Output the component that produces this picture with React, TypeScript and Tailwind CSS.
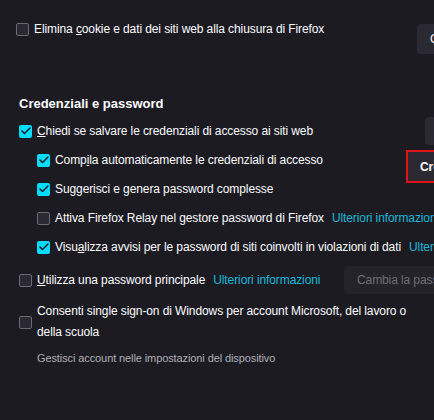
import { Check } from 'lucide-react'

function Box({ checked }: { checked?: boolean }) {
  if (checked) {
    return (
      <span className="flex h-[13px] w-[13px] shrink-0 items-center justify-center rounded-[2px] bg-[#00ddff]">
        <Check className="h-[12px] w-[12px] text-[#1c1b22]" strokeWidth={3} />
      </span>
    )
  }
  return <span className="h-[13px] w-[13px] shrink-0 rounded-[2px] border border-[#6b6a72] bg-[#2b2a33]" />
}

function Link({ children }: { children: React.ReactNode }) {
  return <span className="ml-[8px] whitespace-nowrap text-[#1ab8d8]">{children}</span>
}

function Row({ checked, children }: { checked?: boolean; children: React.ReactNode }) {
  return (
    <div className="flex h-[20px] items-center gap-[5px] whitespace-nowrap">
      <Box checked={checked} />
      <span>{children}</span>
    </div>
  )
}

export default function App() {
  return (
    <div className="h-[420px] w-[434px] overflow-hidden bg-[#1c1b22] text-[12px] tracking-[-0.1px] text-[#fbfbfe] [font-family:'Liberation_Sans',Arial,sans-serif]">
      <div className="w-[560px] pl-[19px] pt-[19px]">
        {/* cookie */}
        <div className="flex items-start justify-between">
          <div className="-ml-[3px] min-w-0">
            <Row>
              Elimina <u>c</u>ookie e dati dei siti web alla chiusura di Firefox
            </Row>
          </div>
          <button className="mt-[5px] h-[30px] w-[143px] shrink-0 rounded-[4px] bg-[#2b2a33] pl-[13px] text-left">
            Gestisci eccezioni…
          </button>
        </div>

        <h2 className="mt-[42px] text-[13px] font-bold leading-[16px] tracking-normal">Credenziali e password</h2>

        <div className="relative mt-[5px] flex items-start justify-between">
          <div className="mt-[4px] flex min-w-0 flex-col gap-[9px]">
            <Row checked>
              <u>C</u>hiedi se salvare le credenziali di accesso ai siti web
            </Row>
            <div className="flex flex-col gap-[9px] pl-[18px]">
              <Row checked>
                Comp<u>i</u>la automaticamente le credenziali di accesso
              </Row>
              <Row checked>
                Su<u>g</u>gerisci e genera password complesse
              </Row>
              <Row>
                Attiva Firefox Relay nel gestore password di Firefox
                <Link>Ulteriori informazioni</Link>
              </Row>
              <Row checked>
                Visu<u>a</u>lizza avvisi per le password di siti coinvolti in violazioni di dati
                <Link>Ulteriori informazioni</Link>
              </Row>
            </div>
          </div>
          <div className="flex w-[154px] shrink-0 flex-col items-end gap-[5px]">
            <button className="h-[28px] w-[135px] rounded-[4px] bg-[#2b2a33] pl-[10px] text-left">
              Eccezioni…
            </button>
            <button className="h-[33px] w-[154px] border-2 border-[#e0131b] bg-[#2b2a33] pl-[12px] text-left font-bold">
              Credenziali salvate…
            </button>
          </div>
        </div>

        <div className="mt-[9px] flex h-[28px] items-center justify-between">
          <Row>
            <u>U</u>tilizza una password principale
            <Link>Ulteriori informazioni</Link>
          </Row>
          <button className="h-[28px] w-[216px] shrink-0 rounded-[4px] bg-[#24232a] pl-[13px] text-left text-[#6f6e76]">
            Cambia la password principale…
          </button>
        </div>

        <div className="mt-[7px] flex items-center gap-[5px]">
          <Box />
          <p className="leading-[21px]">
            Consenti single sign-on di Windows per account Microsoft, del lavoro o
            <br />
            della scuola
          </p>
        </div>
        <p className="mt-[7px] pl-[18px] text-[11px] leading-[16px] text-[#b0afb7]">
          Gestisci account nelle impostazioni del dispositivo
        </p>
      </div>
    </div>
  )
}
